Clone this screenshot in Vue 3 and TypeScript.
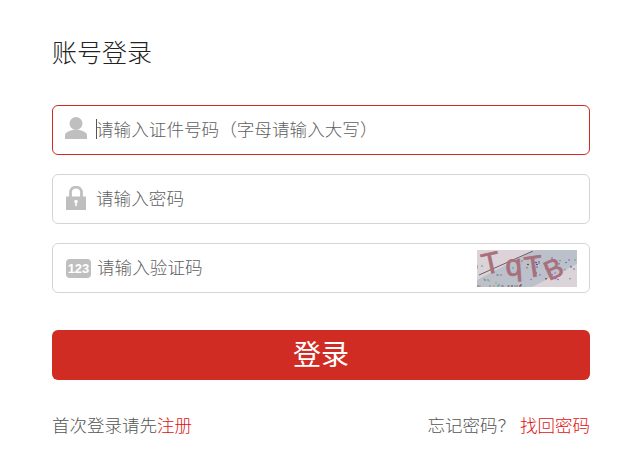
<script setup lang="ts">
const colors = ['#6a5acd', '#3aa0a0', '#c05ac0', '#5aa05a', '#d05050', '#4070c0', '#b0a040', '#333']
const dots = Array.from({ length: 70 }, (_, i) => {
  const x = (i * 37 + (i * i) % 13) % 100
  const y = 8 + ((i * 23 + (i * i * 3) % 17) % 35) * (0.35 + (x < 50 ? 0.65 : 0.3))
  return { x, y: Math.min(y + (x < 45 ? 8 : 0), 36), c: colors[i % colors.length] }
})
</script>

<template>
  <main class="page">
    <h1 class="title">账号登录</h1>
    <form class="form" @submit.prevent>
      <div class="field active">
        <svg class="icon" viewBox="0 0 22 22" aria-hidden="true">
          <circle cx="11" cy="6.500" r="6.500" fill="#bfbfbf" />
          <path d="M0 22v-3.500c0-3 3-4 7.500-5.500h7c4.500 1.500 7.500 2.500 7.500 5.500V22z" fill="#bfbfbf" />
        </svg>
        <span class="caret"></span>
        <input class="input" placeholder="请输入证件号码（字母请输入大写）" />
      </div>
      <div class="field">
        <svg class="icon lock" viewBox="0 0 22 24" aria-hidden="true">
          <path d="M5.500 11V6.500a5.500 5.500 0 0 1 11 0V11" fill="none" stroke="#bfbfbf" stroke-width="2.800" />
          <path d="M1 10.500h20V24H1z" fill="#bfbfbf" />
          <circle cx="11" cy="15.500" r="1.800" fill="#fff" />
          <rect x="10.200" y="15.500" width="1.600" height="4.500" fill="#fff" />
        </svg>
        <input class="input" placeholder="请输入密码" />
      </div>
      <div class="field">
        <span class="badge">123</span>
        <input class="input" placeholder="请输入验证码" />
        <svg class="captcha" viewBox="0 0 100 37" aria-hidden="true">
          <rect width="100" height="37" fill="#dcd3d8" />
          <path d="M0 30 58 0H100V14L55 37H0z" fill="#bcc0ca" />
          <path d="M2 25 56 1" stroke="#444" stroke-width="0.800" />
          <circle v-for="(d, i) in dots" :key="i" :cx="d.x" :cy="d.y" r="0.800" :fill="d.c" />
          <g class="letters">
            <text transform="translate(7 25) rotate(-12)">T</text>
            <text transform="translate(29 26) rotate(-4)">q</text>
            <text transform="translate(49 28) rotate(-8)">T</text>
            <text class="small" transform="translate(72 31) rotate(-24)">B</text>
          </g>
        </svg>
      </div>
      <button class="submit" type="submit">登录</button>
    </form>
    <footer class="links">
      <span>首次登录请先<a class="link">注册</a></span>
      <span>忘记密码？<a class="link spaced">找回密码</a></span>
    </footer>
  </main>
</template>

<style scoped>
.page {
  box-sizing: border-box;
  width: 636px;
  height: 464px;
  padding: 33px 46px 0 52px;
  background: #fff;
  font-family: "Microsoft YaHei", "Noto Sans CJK SC", sans-serif;
  font-weight: 300;
  color: #555;
}
.title {
  margin: 0 0 35px;
  height: 37px;
  line-height: 37px;
  font-size: 25px;
  font-weight: 300;
  color: #222;
}
.form {
  display: flex;
  flex-direction: column;
  gap: 19px;
}
.field {
  box-sizing: border-box;
  height: 50px;
  display: flex;
  align-items: center;
  padding: 0 12px;
  border: 1px solid #d5d5d5;
  border-radius: 6px;
}
.field.active {
  border-color: #d12a23;
}
.icon {
  flex: none;
  width: 22px;
  height: 22px;
  margin: 0 9px 5px 0;
}
.icon.lock {
  height: 24px;
  margin-bottom: 3px;
}
.caret {
  width: 1px;
  height: 20px;
  margin: 0 -1px 2px 0;
  background: #555;
}
.input {
  flex: 1;
  min-width: 0;
  padding: 0 0 4px;
  border: 0;
  outline: 0;
  background: transparent;
  font: inherit;
  font-size: 17.600px;
  color: #555;
}
.input::placeholder {
  color: #5f5f5f;
  opacity: 1;
}
.badge {
  flex: none;
  width: 25px;
  height: 19px;
  margin: 0 6px 0 1px;
  border-radius: 4px;
  background: #bfbfbf;
  color: #fff;
  font-family: "Liberation Sans", sans-serif;
  font-size: 13px;
  font-weight: 700;
  line-height: 19px;
  text-align: center;
}
.captcha {
  flex: none;
  width: 100px;
  height: 37px;
}
.letters text {
  font-family: "Liberation Sans", sans-serif;
  font-size: 30px;
  fill: #a8707c;
  stroke: #a8707c;
  stroke-width: 0.700px;
}
.letters .small {
  font-size: 27px;
}
.submit {
  height: 50px;
  margin-top: 18px;
  padding: 0 0 4px;
  border: 0;
  border-radius: 6px;
  background: #d12c24;
  color: #fff;
  font: inherit;
  font-size: 28px;
  font-weight: 400;
}
.links {
  display: flex;
  justify-content: space-between;
  margin-top: 33px;
  font-size: 17.500px;
  line-height: 24px;
}
.link {
  color: #e01010;
}
.spaced {
  margin-left: 5px;
}
</style>
